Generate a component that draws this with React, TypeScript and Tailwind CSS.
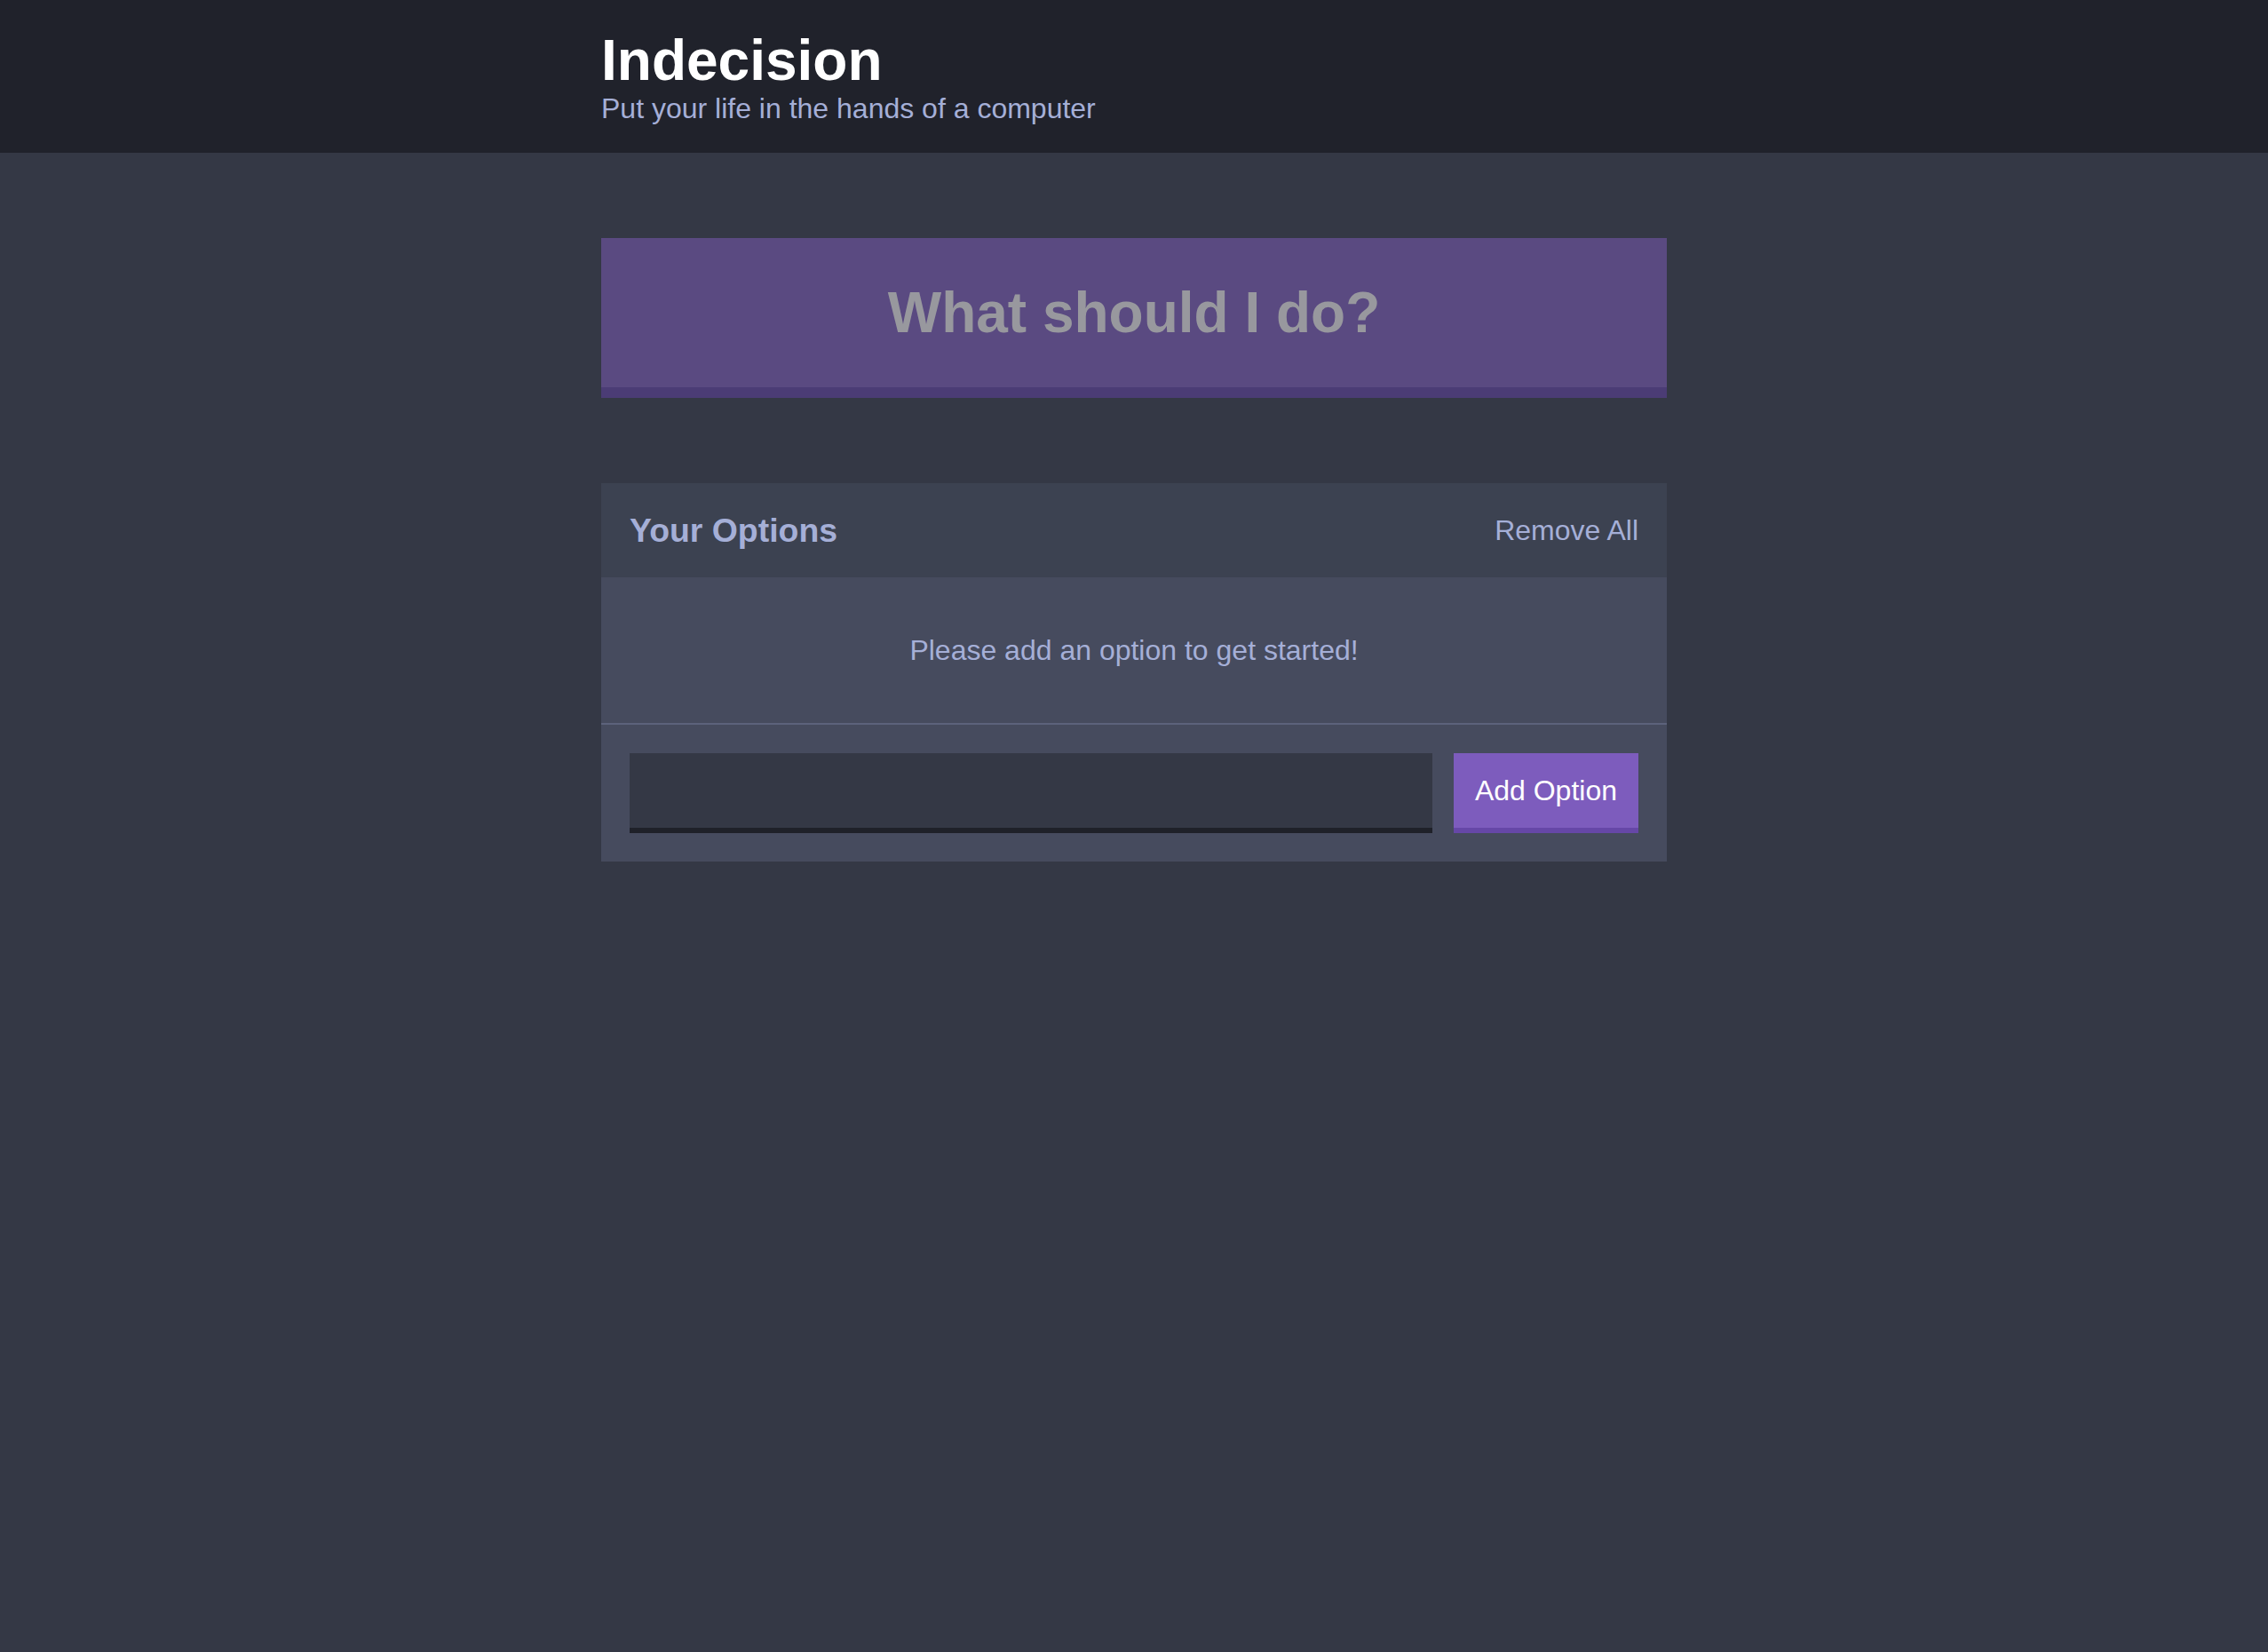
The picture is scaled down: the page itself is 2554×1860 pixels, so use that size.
import React from "react";

export default function App() {
  return (
    <div className="min-h-screen bg-[#343845] font-['Liberation_Sans',Arial,Helvetica,sans-serif]">
      <header className="bg-[#20222b] py-[32px] mb-[96px]">
        <div className="w-[1200px] mx-auto">
          <h1 className="text-white text-[64px] leading-[72px] font-bold m-0">Indecision</h1>
          <h2 className="text-[#a5afd7] text-[32px] leading-[36px] font-medium m-0">
            Put your life in the hands of a computer
          </h2>
        </div>
      </header>
      <div className="w-[1200px] mx-auto">
        <button
          disabled
          className="block w-full bg-[#5a4a81] border-0 border-b-[12px] border-solid border-[#4b3c75] text-[#98989e] font-bold text-[64px] leading-[72px] p-[48px] mb-[96px] text-center"
        >
          What should I do?
        </button>
        <div className="bg-[#464b5e] mb-[96px]">
          <div className="bg-[#3c4251] flex justify-between items-center p-[32px]">
            <h3 className="text-[#a5afd7] text-[37.4px] leading-[42px] font-bold m-0">Your Options</h3>
            <button className="text-[#a5afd7] text-[32px] leading-[36px] bg-transparent p-0">Remove All</button>
          </div>
          <p className="border-b-2 border-solid border-[#5c627b] text-[#a5afd7] text-[32px] leading-[36px] p-[64px] text-center m-0">
            Please add an option to get started!
          </p>
          <form className="flex p-[32px]" onSubmit={(e) => e.preventDefault()}>
            <input
              type="text"
              name="option"
              className="flex-1 min-w-0 bg-[#343845] border-0 border-b-[6px] border-solid border-[#1f2129] mr-[24px] p-[24px] text-[32px] leading-[36px] text-[#a5afd7] outline-none"
            />
            <button className="bg-[#7d5cbd] border-0 border-b-[6px] border-solid border-[#6647a7] text-white text-[32px] leading-[36px] p-[24px] font-medium">
              Add Option
            </button>
          </form>
        </div>
      </div>
    </div>
  );
}
